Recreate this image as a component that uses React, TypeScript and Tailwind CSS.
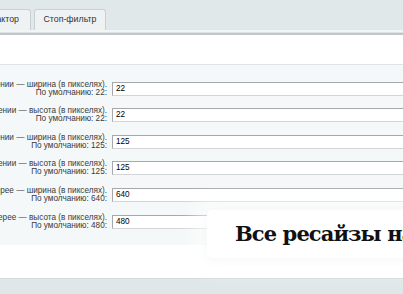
import React from "react";

type Row = {
  label: string;
  hint: string;
  value: string;
};

const rows: Row[] = [
  { label: "Размер иконки при отображении — ширина (в пикселях).", hint: "По умолчанию: 22:", value: "22" },
  { label: "Размер иконки при отображении — высота (в пикселях).", hint: "По умолчанию: 22:", value: "22" },
  { label: "Размер превью при отображении — ширина (в пикселях).", hint: "По умолчанию: 125:", value: "125" },
  { label: "Размер превью при отображении — высота (в пикселях).", hint: "По умолчанию: 125:", value: "125" },
  { label: "Размер картинки в галерее — ширина (в пикселях).", hint: "По умолчанию: 640:", value: "640" },
  { label: "Размер картинки в галерее — высота (в пикселях).", hint: "По умолчанию: 480:", value: "480" },
];

function Tab({ children, className }: { children: React.ReactNode; className?: string }) {
  return (
    <div
      className={`flex h-[21px] items-center rounded-t-[3px] border border-b-0 border-[#c9d0d3] bg-[#eef2f3] text-[8.8px] text-[#333] ${className ?? ""}`}
    >
      {children}
    </div>
  );
}

export default function App() {
  return (
    <div className="relative h-[294px] w-[403px] overflow-hidden bg-white font-['Liberation_Sans',Arial,sans-serif]">
      {/* tabs */}
      <div className="flex h-[30px] items-end gap-[3px] bg-[#e1e8ea]">
        <Tab className="-ml-[29px] w-[60px] justify-end pr-[11px]">Редактор</Tab>
        <Tab className="w-[72px] justify-center">Стоп-фильтр</Tab>
      </div>
      <div className="h-[2px] bg-[#f2f5f6]" />
      <div className="h-[1px] bg-[#dde2e4]" />
      <div className="h-[2px] bg-[#c3c6c8]" />

      <div className="h-[30px] border-b border-[#dde3e6] bg-white" />

      {/* settings */}
      <div className="flex flex-col gap-[12.6px] bg-[#f5f8f9] pb-[16.5px] pt-[16.7px]">
        {rows.map((row) => (
          <div key={row.label} className="flex h-[14px] items-center">
            <div className="flex w-[107px] shrink-0 flex-col items-end text-[8.2px] leading-[8px] text-[#3a3a3a]">
              <span className="whitespace-nowrap">{row.label}</span>
              <span className="whitespace-nowrap">{row.hint}</span>
            </div>
            <div className="ml-[5px] flex h-[14px] w-[320px] shrink-0 items-center border border-[#a5a9ac] border-b-[#d2d6d8] border-r-[#d2d6d8] bg-white pl-[3px] text-[8.2px] text-black">
              {row.value}
            </div>
          </div>
        ))}
      </div>

      <div className="h-[34px] border-b border-[#d3dadd] bg-white" />
      <div className="h-[20px] bg-[#e0e7e9]" />

      {/* overlay banner */}
      <div className="absolute left-[207px] top-[210px] flex h-[48px] w-[240px] items-center rounded-[5px] bg-white pl-[28px] shadow-[0_0_20px_12px_rgba(255,255,255,0.6),0_2px_10px_rgba(0,0,0,0.07)]">
        <span className="whitespace-nowrap font-['DejaVu_Serif',serif] text-[21px] font-bold tracking-[-0.9px] text-[#111]">
          Все ресайзы на
        </span>
      </div>
    </div>
  );
}
